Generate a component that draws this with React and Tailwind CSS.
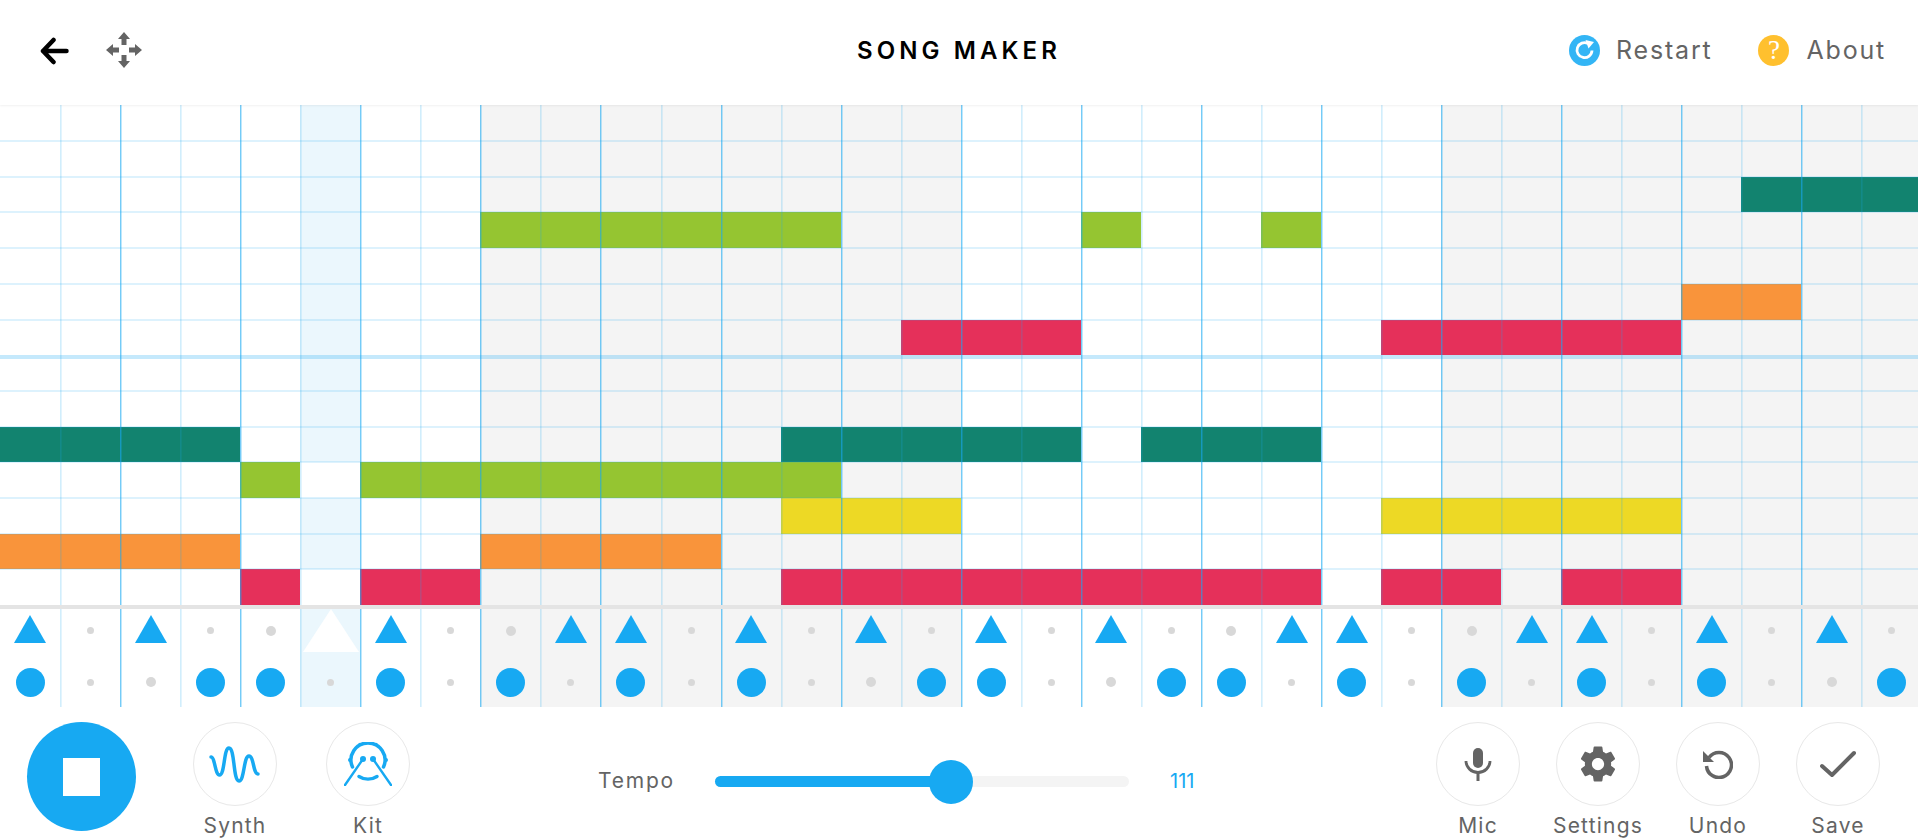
import React from 'react';

const COLS = 32;
const ROWS = 14;

const notes = [
  { row: 2, from: 29, to: 32, color: '#12836f' },
  { row: 3, from: 8, to: 14, color: '#95c531' },
  { row: 3, from: 18, to: 19, color: '#95c531' },
  { row: 3, from: 21, to: 22, color: '#95c531' },
  { row: 5, from: 28, to: 30, color: '#f9943b' },
  { row: 6, from: 15, to: 18, color: '#e5305a' },
  { row: 6, from: 23, to: 28, color: '#e5305a' },
  { row: 9, from: 0, to: 4, color: '#12836f' },
  { row: 9, from: 13, to: 18, color: '#12836f' },
  { row: 9, from: 19, to: 22, color: '#12836f' },
  { row: 10, from: 4, to: 5, color: '#95c531' },
  { row: 10, from: 5, to: 6, color: '#ffffff' },
  { row: 10, from: 6, to: 14, color: '#95c531' },
  { row: 11, from: 13, to: 16, color: '#edd925' },
  { row: 11, from: 23, to: 28, color: '#edd925' },
  { row: 12, from: 0, to: 4, color: '#f9943b' },
  { row: 12, from: 8, to: 12, color: '#f9943b' },
  { row: 13, from: 4, to: 5, color: '#e5305a' },
  { row: 13, from: 5, to: 6, color: '#ffffff' },
  { row: 13, from: 6, to: 8, color: '#e5305a' },
  { row: 13, from: 13, to: 22, color: '#e5305a' },
  { row: 13, from: 23, to: 25, color: '#e5305a' },
  { row: 13, from: 26, to: 28, color: '#e5305a' },
];

const triangles = [0, 2, 6, 9, 10, 12, 14, 16, 18, 21, 22, 25, 26, 28, 30];
const circles = [0, 3, 4, 6, 8, 10, 12, 15, 16, 19, 20, 22, 24, 26, 28, 31];

const columns = Array.from({ length: COLS }, (_, i) => i);
const rows = Array.from({ length: ROWS }, (_, i) => i);

const isGrey = (c) => (c >= 8 && c < 16) || c >= 24;

function columnBg(c) {
  if (c === 5) return 'bg-[#ebf7fd]';
  return isGrey(c) ? 'bg-[#f4f4f4]' : 'bg-white';
}

function columnLine(c) {
  if (c === 0) return '';
  return c % 2 === 0
    ? 'border-l border-[#18a8f2]/60 shadow-[inset_1px_0_0_rgba(24,168,242,0.28)]'
    : 'border-l border-[#18a8f2]/20 shadow-[inset_1px_0_0_rgba(24,168,242,0.12)]';
}

function Dot({ big }) {
  return <div className={big ? 'w-[10px] h-[10px] rounded-full bg-[#d8d8d8]' : 'w-[7px] h-[7px] rounded-full bg-[#d8d8d8]'} />;
}

function Triangle() {
  return (
    <svg width="32" height="28" viewBox="0 0 32 28" className="-mt-[3px]">
      <polygon points="16,0 32,28 0,28" fill="#17a9f2" />
    </svg>
  );
}

function WhiteTriangle() {
  return (
    <svg width="56" height="43" viewBox="0 0 56 43">
      <polygon points="28,0 56,43 0,43" fill="#ffffff" />
    </svg>
  );
}

function NoteGrid() {
  return (
    <div className="grid grid-cols-[repeat(32,60.06px)] grid-rows-[repeat(14,35.7px)] border-b-4 border-[#e4e4e4] w-[1918px] overflow-hidden">
      {columns.map((c) => (
        <div key={`bg${c}`} className={columnBg(c)} style={{ gridColumn: c + 1, gridRow: '1 / -1' }} />
      ))}
      {notes.map((n) => (
        <div
          key={`${n.row}-${n.from}`}
          style={{ gridRow: n.row + 1, gridColumn: `${n.from + 1} / ${n.to + 1}`, backgroundColor: n.color }}
        />
      ))}
      {rows.slice(1).map((r) => (
        <div
          key={`h${r}`}
          className={r === 7 ? 'border-t-4 border-[#18a8f2]/25' : 'border-t-2 -mt-px border-[#18a8f2]/15'}
          style={{ gridRow: r + 1, gridColumn: '1 / -1' }}
        />
      ))}
      {columns.map((c) => (
        <div key={`v${c}`} className={columnLine(c)} style={{ gridColumn: c + 1, gridRow: '1 / -1' }} />
      ))}
    </div>
  );
}

function PercGrid() {
  return (
    <div className="grid grid-cols-[repeat(32,60.06px)] grid-rows-[43px_55px] w-[1918px] overflow-hidden">
      {columns.map((c) => (
        <div key={`t${c}`} className={`flex items-center justify-center ${columnBg(c)} ${columnLine(c)}`}>
          {c === 5 ? <WhiteTriangle /> : triangles.includes(c) ? <Triangle /> : <Dot big={c % 4 === 0} />}
        </div>
      ))}
      {columns.map((c) => (
        <div key={`b${c}`} className={`flex items-center justify-center pt-[5px] ${columnBg(c)} ${columnLine(c)}`}>
          {circles.includes(c) ? (
            <div className="w-[29px] h-[29px] rounded-full bg-[#17a9f2]" />
          ) : (
            <Dot big={c % 4 === 2} />
          )}
        </div>
      ))}
    </div>
  );
}

function RoundButton({ label, children }) {
  return (
    <div className="w-[84px] flex flex-col items-center">
      <div className="w-[84px] h-[84px] rounded-full border border-[#e8e8e8] flex items-center justify-center">
        {children}
      </div>
      <span className="mt-[6px] text-[21px] leading-[28px] tracking-[1.2px] text-[#646464] whitespace-nowrap">{label}</span>
    </div>
  );
}

function SynthIcon() {
  return (
    <svg width="52" height="37" viewBox="0 0 52 37" fill="none" stroke="#17a9f2" strokeWidth="3.500" strokeLinecap="round">
      <path d="M2 11C6 11 6 29 10.500 29C16 29 14.500 2 20 2C26 2 24 35 30 35C35.500 35 34.500 10 40 10C45 10 44 28 49 28" />
    </svg>
  );
}

function KitIcon() {
  return (
    <svg width="48" height="44" viewBox="0 0 48 44" fill="none" stroke="#17a9f2" strokeLinecap="round">
      <path d="M8.500 25A17 17 0 1 1 39.500 25" strokeWidth="3.500" />
      <path d="M15 34.500A17 17 0 0 0 33 34.500" strokeWidth="3.500" />
      <circle cx="6" cy="18" r="2" fill="#17a9f2" stroke="none" />
      <circle cx="42" cy="18" r="2" fill="#17a9f2" stroke="none" />
      <circle cx="16" cy="2.500" r="1.800" fill="#17a9f2" stroke="none" />
      <circle cx="32" cy="2.500" r="1.800" fill="#17a9f2" stroke="none" />
      <path d="M19 17L1 43M29 17l18 26" strokeWidth="2.400" />
      <circle cx="19" cy="17" r="3" fill="#17a9f2" stroke="none" />
      <circle cx="29" cy="17" r="3" fill="#17a9f2" stroke="none" />
    </svg>
  );
}

function MicIcon() {
  return (
    <svg width="28" height="33" viewBox="0 0 28 33" fill="#646464">
      <rect x="9" y="0" width="10" height="20" rx="5" />
      <path d="M2 13a12 11.500 0 0 0 24 0" fill="none" stroke="#646464" strokeWidth="2.800" />
      <rect x="12.500" y="24" width="3" height="9" />
    </svg>
  );
}

function GearIcon() {
  return (
    <svg width="42" height="42" viewBox="0 0 24 24" fill="#646464">
      <path d="M19.430 12.980c.04-.32.070-.64.070-.98s-.03-.66-.07-.98l2.110-1.650c.19-.15.240-.42.120-.64l-2-3.460c-.12-.22-.39-.3-.61-.22l-2.490 1c-.52-.4-1.080-.73-1.690-.98l-.38-2.650C14.460 2.180 14.250 2 14 2h-4c-.25 0-.46.180-.49.420l-.38 2.650c-.61.250-1.170.590-1.690.980l-2.490-1c-.23-.09-.49 0-.61.220l-2 3.460c-.13.220-.07.490.12.640l2.110 1.650c-.04.320-.07.650-.07.980s.03.660.07.980l-2.110 1.650c-.19.150-.24.420-.12.640l2 3.460c.12.220.39.300.61.220l2.490-1c.52.400 1.080.730 1.690.980l.38 2.650c.03.240.24.420.49.420h4c.25 0 .46-.18.49-.42l.38-2.650c.61-.25 1.170-.59 1.690-.98l2.490 1c.23.090.49 0 .61-.22l2-3.460c.12-.22.070-.49-.12-.64l-2.110-1.650zM12 15.500c-1.930 0-3.500-1.570-3.500-3.500s1.570-3.500 3.500-3.500 3.500 1.570 3.500 3.500-1.570 3.500-3.500 3.500z" />
    </svg>
  );
}

function UndoIcon() {
  return (
    <svg width="30" height="29" viewBox="0 0 30 29" fill="none">
      <path d="M6 7.500A12.500 12.500 0 1 1 3.500 16" stroke="#646464" strokeWidth="3.500" />
      <polygon points="0,1 0,12 11,12" fill="#646464" />
    </svg>
  );
}

function CheckIcon() {
  return (
    <svg width="36" height="28" viewBox="0 0 36 28" fill="none" stroke="#646464" strokeWidth="4" strokeLinecap="round" strokeLinejoin="round">
      <path d="M2 16l10 9L34 3" />
    </svg>
  );
}

function Header() {
  return (
    <header className="relative h-[105.4px] grid grid-cols-[1fr_auto_1fr] items-center px-[40px] bg-white z-10 shadow-[0_1px_2px_rgba(0,0,0,0.06)]">
      <div className="flex items-center">
        <svg width="29" height="28" viewBox="0 0 29 28" fill="none" stroke="#000000" strokeWidth="4.500" strokeLinecap="round" strokeLinejoin="round" className="mt-[-3px]">
          <path d="M26.500 14H3M13.500 3L3 14l10.500 11" />
        </svg>
        <svg width="36" height="36" viewBox="0 0 36 36" fill="#646464" className="ml-[37px] mt-[-5px]">
          <path d="M18 0l6 7h-3.500v6h-5V7H12zM18 36l6-7h-3.500v-6h-5v6H12zM0 18l7-6v3.500h6v5H7V24zM36 18l-7-6v3.500h-6v5h6V24z" />
        </svg>
      </div>
      <div className="text-[24px] leading-[32px] font-semibold tracking-[4.1px] text-black mt-[-4px]">SONG MAKER</div>
      <div className="flex items-center justify-end text-[25px] leading-[32px] tracking-[1.8px] text-[#646464] mr-[-8px] mt-[-5px]">
        <div className="w-[31px] h-[31px] rounded-full bg-[#33b5f5] flex items-center justify-center">
          <svg width="22" height="22" viewBox="0 0 22 22" fill="none" stroke="#ffffff" strokeWidth="2.800">
            <path d="M18 11.500A7.500 7.500 0 1 1 14 4.500" />
            <polygon points="11.500,1 20,3 14.500,9.500" fill="#ffffff" stroke="none" />
          </svg>
        </div>
        <span className="ml-[16px]">Restart</span>
        <div className="ml-[46px] w-[31px] h-[31px] rounded-full bg-[#ffc02e] flex items-center justify-center font-['Liberation_Serif',serif] text-[27px] leading-none tracking-normal text-white">?</div>
        <span className="ml-[17px]">About</span>
      </div>
    </header>
  );
}

function Toolbar() {
  return (
    <div className="h-[133px] flex items-start pl-[27px] pr-[38px] bg-white">
      <div className="mt-[15px] w-[109px] h-[109px] rounded-full bg-[#17a9f2] flex items-center justify-center">
        <div className="w-[37px] h-[38px] bg-white" />
      </div>
      <div className="mt-[15px] ml-[57px] flex gap-[49px]">
        <RoundButton label="Synth"><SynthIcon /></RoundButton>
        <RoundButton label="Kit"><KitIcon /></RoundButton>
      </div>
      <div className="mt-[52px] ml-[188px] flex items-center text-[21px] leading-[44px]">
        <span className="w-[117px] tracking-[1.8px] text-[#646464]">Tempo</span>
        <div className="relative w-[414px] h-[11px] rounded-full bg-[#f4f4f4]">
          <div className="h-full w-[236px] rounded-full bg-[#17a9f2]" />
          <div className="absolute left-[214px] top-[-16px] w-[44px] h-[44px] rounded-full bg-[#17a9f2]" />
        </div>
        <span className="ml-[41px] text-[20px] text-[#17a9f2]">111</span>
      </div>
      <div className="mt-[15px] ml-auto flex gap-[36px]">
        <RoundButton label="Mic"><MicIcon /></RoundButton>
        <RoundButton label="Settings"><GearIcon /></RoundButton>
        <RoundButton label="Undo"><UndoIcon /></RoundButton>
        <RoundButton label="Save"><CheckIcon /></RoundButton>
      </div>
    </div>
  );
}

export default function App() {
  return (
    <div className="w-[1918px] h-[840px] overflow-hidden bg-white font-['Inter',sans-serif]">
      <Header />
      <NoteGrid />
      <PercGrid />
      <Toolbar />
    </div>
  );
}
